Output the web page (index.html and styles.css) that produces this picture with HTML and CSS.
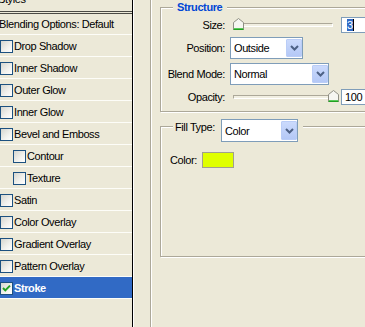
FILE: index.html
```html
<!DOCTYPE html>
<html>
<head>
<meta charset="utf-8">
<title>Layer Style - Stroke</title>
<link rel="stylesheet" href="styles.css">
</head>
<body>
<div class="win">
  <div class="styles">
    <div class="hdr"><span class="hdr-text">Styles</span></div>
    <div class="hdr-rule"></div>
    <div class="row blend">Blending Options: Default</div>
    <div class="row"><span class="cb"></span><span class="lbltext">Drop Shadow</span></div>
    <div class="row"><span class="cb"></span><span class="lbltext">Inner Shadow</span></div>
    <div class="row"><span class="cb"></span><span class="lbltext">Outer Glow</span></div>
    <div class="row"><span class="cb"></span><span class="lbltext">Inner Glow</span></div>
    <div class="row"><span class="cb"></span><span class="lbltext">Bevel and Emboss</span></div>
    <div class="row sub"><span class="cb"></span><span class="lbltext">Contour</span></div>
    <div class="row sub"><span class="cb"></span><span class="lbltext">Texture</span></div>
    <div class="row"><span class="cb"></span><span class="lbltext">Satin</span></div>
    <div class="row"><span class="cb"></span><span class="lbltext">Color Overlay</span></div>
    <div class="row"><span class="cb"></span><span class="lbltext">Gradient Overlay</span></div>
    <div class="row"><span class="cb"></span><span class="lbltext">Pattern Overlay</span></div>
    <div class="row selrow"><span class="cb"><svg class="check" width="11" height="11" viewBox="0 0 11 11"><polyline points="2,5 4.3,7.4 9,2.6" fill="none" stroke="#21A121" stroke-width="2"/></svg></span><span class="lbltext">Stroke</span></div>
    <div class="row-end"></div>
  </div>

  <div class="main">
    <div class="outer">
      <div class="group structure">
        <span class="gtitle">Structure</span>
        <div class="form">
          <div class="lbl">Size:</div>
          <div class="ctl">
            <div class="slider">
              <div class="track"></div>
              <svg class="thumb" style="left:0px" width="11" height="12" viewBox="0 0 11 12"><polygon points="0.5,11.5 0.5,4.5 5.5,0.5 10.5,4.5 10.5,11.5" fill="#F6F6F1" stroke="#8F8F84"/><line x1="1" y1="10.5" x2="10" y2="10.5" stroke="#5BC95B"/><line x1="0.5" y1="11.5" x2="10.5" y2="11.5" stroke="#21A121"/></svg>
            </div>
            <div class="num sizeval"><span class="hl">3</span><span class="caret"></span></div>
          </div>

          <div class="lbl">Position:</div>
          <div class="ctl">
            <div class="combo w-pos"><span class="ctext">Outside</span><span class="cbtn"><svg width="9" height="6" viewBox="0 0 9 6"><polyline points="1,1 4.5,4.5 8,1" fill="none" stroke="#4D6185" stroke-width="2"/></svg></span></div>
          </div>

          <div class="lbl">Blend Mode:</div>
          <div class="ctl">
            <div class="combo w-blend"><span class="ctext">Normal</span><span class="cbtn"><svg width="9" height="6" viewBox="0 0 9 6"><polyline points="1,1 4.5,4.5 8,1" fill="none" stroke="#4D6185" stroke-width="2"/></svg></span></div>
          </div>

          <div class="lbl">Opacity:</div>
          <div class="ctl">
            <div class="slider">
              <div class="track"></div>
              <svg class="thumb" style="left:95px" width="11" height="12" viewBox="0 0 11 12"><polygon points="0.5,11.5 0.5,4.5 5.5,0.5 10.5,4.5 10.5,11.5" fill="#F6F6F1" stroke="#8F8F84"/><line x1="1" y1="10.5" x2="10" y2="10.5" stroke="#5BC95B"/><line x1="0.5" y1="11.5" x2="10.5" y2="11.5" stroke="#21A121"/></svg>
            </div>
            <div class="num opval">100</div>
          </div>
        </div>
      </div>

      <div class="group fill">
        <div class="ftitle">
          <span class="flbl">Fill Type:</span>
          <div class="combo w-fill"><span class="ctext">Color</span><span class="cbtn"><svg width="9" height="6" viewBox="0 0 9 6"><polyline points="1,1 4.5,4.5 8,1" fill="none" stroke="#4D6185" stroke-width="2"/></svg></span></div>
        </div>
        <div class="colorrow">
          <span class="clbl">Color:</span>
          <span class="swatch"></span>
        </div>
      </div>
    </div>
  </div>
</div>
</body>
</html>
```

FILE: styles.css
```css
* { box-sizing: border-box; }

html, body {
  margin: 0;
  padding: 0;
}

body {
  width: 365px;
  height: 327px;
  overflow: hidden;
  background: #ECE9D8;
  font-family: "Liberation Sans", Arial, sans-serif;
  font-size: 11px;
  letter-spacing: -0.4px;
  color: #000;
}

.win {
  display: flex;
  height: 327px;
}

/* ---------- left styles list ---------- */
.styles {
  width: 133px;
  flex: none;
  height: 100%;
  border-right: 1px solid #000;
}

.hdr {
  height: 11px;
  overflow: hidden;
}

.hdr-text {
  display: block;
  line-height: 13px;
  margin-top: -7px;
  margin-left: -2px;
}

.hdr-rule {
  height: 3px;
  border-top: 1px solid #4a4a44;
  border-bottom: 1px solid #4a4a44;
}

.row {
  height: 22px;
  border-top: 1px solid #FDFDF8;
  display: flex;
  align-items: center;
  white-space: nowrap;
}

.row.blend {
  height: 20px;
  border-top: none;
  margin-left: -1px;
}

.row.sub {
  padding-left: 13px;
}

.cb {
  flex: none;
  width: 13px;
  height: 13px;
  margin-top: 1px;
  margin-right: 1px;
  border: 1px solid #1C5180;
  background: linear-gradient(135deg, #D6D6CF 0%, #F2F2EE 60%, #FFFFFF 100%);
  display: flex;
}

.check {
  display: block;
}

.row.selrow {
  background: #316AC5;
  color: #fff;
  font-weight: bold;
}

.row-end {
  border-top: 1px solid #FDFDF8;
}

/* ---------- right panel ---------- */
.main {
  flex: 1;
  display: flex;
  padding-left: 17px;
  box-shadow: inset 1px 0 0 #fff;
}

.outer {
  flex: 1;
  border-left: 1px solid #ACA899;
  box-shadow: inset 1px 0 0 #fff;
  padding: 7px 0 0 9px;
}

.group {
  position: relative;
  width: 260px;
  border: 1px solid #ACA899;
  box-shadow: inset 1px 1px 0 #fff, 1px 1px 0 #fff;
}

.structure {
  height: 105px;
  padding: 9px 0 6px 0;
}

.gtitle {
  position: absolute;
  top: -7px;
  left: 12px;
  padding: 0 5px 0 4px;
  line-height: 13px;
  background: #ECE9D8;
  color: #0046D5;
  font-weight: bold;
}

.form {
  display: grid;
  grid-template-columns: 64px auto;
  grid-template-rows: 16px 22px 22px 16px;
  column-gap: 5px;
  row-gap: 4px;
  align-items: center;
}

.lbl {
  text-align: right;
  white-space: nowrap;
}

.ctl {
  display: flex;
  align-items: center;
  height: 100%;
}

.slider {
  position: relative;
  width: 100px;
  height: 16px;
  margin-left: 3px;
}

.track {
  margin-top: 6px;
  height: 4px;
  border-top: 1px solid #ACA899;
  border-left: 1px solid #ACA899;
  border-bottom: 1px solid #fff;
  border-right: 1px solid #fff;
  background: #F1EFE2;
}

.thumb {
  position: absolute;
  top: 1px;
  display: block;
}

.num {
  margin-left: 8px;
  width: 40px;
  height: 16px;
  border: 1px solid #7F9DB9;
  background: #fff;
  line-height: 14px;
  display: flex;
  align-items: center;
}

.sizeval {
  padding-left: 5px;
}

.hl {
  background: #316AC5;
  color: #fff;
  line-height: 12px;
  padding: 0 0 0 0;
}

.caret {
  width: 1px;
  height: 12px;
  background: #000;
}

.opval {
  padding-left: 3px;
}

.combo {
  height: 22px;
  border: 1px solid #7F9DB9;
  background: #fff;
  display: flex;
  align-items: center;
  padding-left: 3px;
  white-space: nowrap;
}

.w-pos { width: 73px; }
.w-blend { width: 99px; }
.w-fill { width: 77px; height: 23px; }

.ctext {
  flex: 1;
}

.cbtn {
  flex: none;
  align-self: stretch;
  width: 16px;
  margin: 1px 0 1px 0;
  border: 1px solid #BACDF7;
  border-radius: 1px;
  background: linear-gradient(#CBDAFC, #B4C8F6);
  display: flex;
  align-items: center;
  justify-content: center;
}

.cbtn svg {
  display: block;
}

/* ---------- fill group ---------- */
.fill {
  margin-top: 14px;
  height: 131px;
  padding: 25px 0 0 9px;
}

.ftitle {
  position: absolute;
  top: -8px;
  left: 12px;
  padding: 0 5px 0 2px;
  background: #ECE9D8;
  display: flex;
  align-items: flex-start;
}

.flbl {
  width: 46px;
  line-height: 13px;
  padding-top: 2px;
  white-space: nowrap;
}

.colorrow {
  display: flex;
  align-items: center;
  height: 16px;
}

.clbl {
  width: 32px;
  white-space: nowrap;
}

.swatch {
  width: 32px;
  height: 16px;
  border: 1px solid #A09F90;
  background: #DFFF00;
}
```
